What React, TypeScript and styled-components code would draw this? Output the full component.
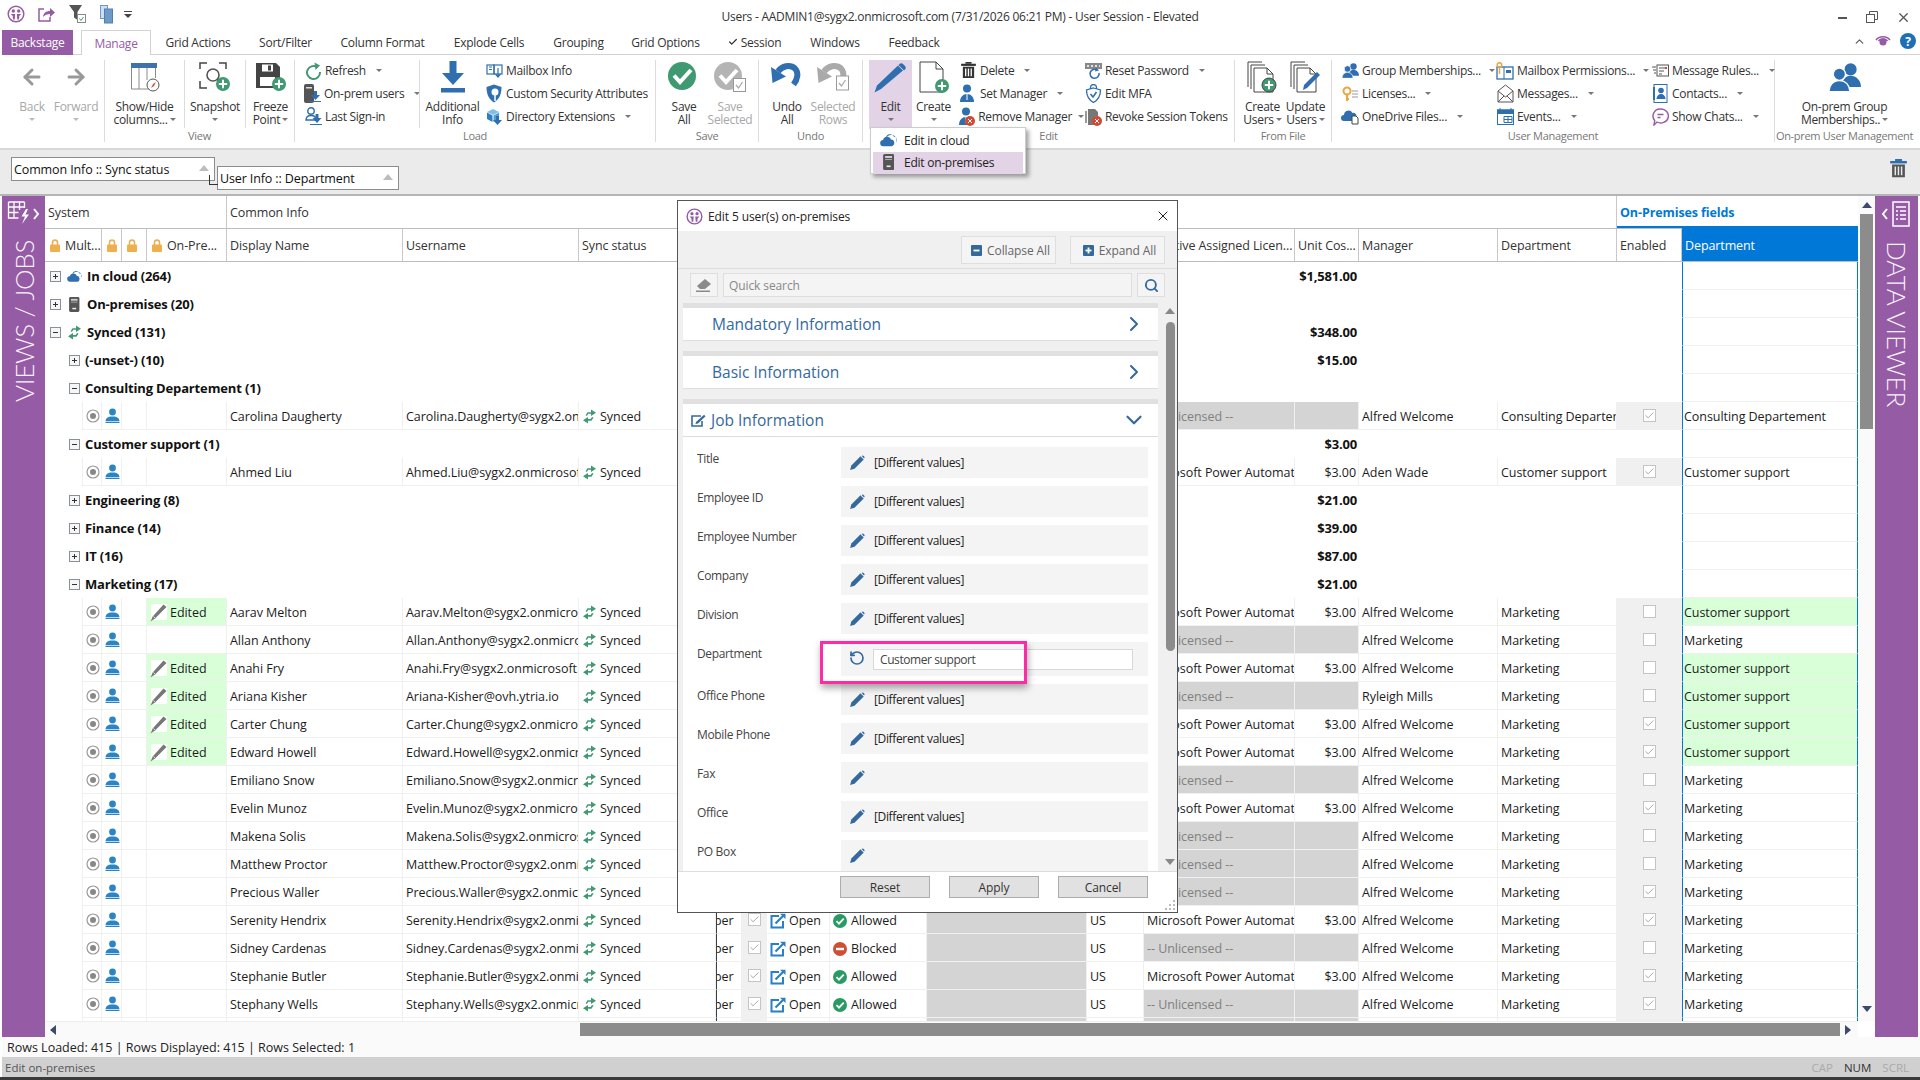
import React from "react";
import styled, { createGlobalStyle } from "styled-components";
import { ArrowLeft, ArrowRight, Check, ChevronRight, ChevronDown, ChevronUp, RotateCcw, Search, X } from "lucide-react";

const PURPLE = "#955ba5";
const BLUE = "#2f6fb0";
const GREEN = "#3f9a72";
const STEEL = "#34699e";

const GlobalStyle = createGlobalStyle`
  html, body { margin: 0; padding: 0; width: 1920px; height: 1080px; overflow: hidden; background: #fff; }
  body { font-family: "Open Sans", "Noto Sans", sans-serif; font-size: 12px; color: #222; }
  * { box-sizing: border-box; }
`;

/* ---------- little drawings ---------- */

const Logo = ({ s = 18 }: { s?: number }) => (
  <svg width={s} height={s} viewBox="0 0 18 18">
    <circle cx="9" cy="9" r="7.8" fill="none" stroke={PURPLE} strokeWidth="1.5" />
    <circle cx="6.3" cy="6" r="1.7" fill={PURPLE} />
    <circle cx="11.7" cy="6" r="1.7" fill={PURPLE} />
    <path d="M3.8 9h4.4l-.5 5.5H6L5.7 11zM9.8 9h4.4l-1.9 2-.3 3.5H10.3z" fill={PURPLE} />
  </svg>
);
const Padlock = () => (
  <svg width="10" height="13" viewBox="0 0 10 13">
    <path d="M2.5 6V3.6a2.5 2.5 0 0 1 5 0V6" fill="none" stroke="#e6b35c" strokeWidth="1.6" />
    <rect y="5.5" width="10" height="7.5" rx="1" fill="#eeb04c" />
  </svg>
);
const Radio = () => (
  <svg width="14" height="14" viewBox="0 0 14 14">
    <circle cx="7" cy="7" r="6" fill="#fff" stroke="#999" strokeWidth="1.2" />
    <circle cx="7" cy="7" r="3" fill="#888" />
  </svg>
);
const Person = () => (
  <svg width="15" height="15" viewBox="0 0 15 15">
    <circle cx="7.5" cy="4" r="3.4" fill="#2b85c5" />
    <path d="M.5 13c.3-2.8 2.700-3.900 4.700-4.400h4.600c2 .5 4.400 1.600 4.700 4.400z" fill="#2b85c5" />
    <rect x=".5" y="13.700" width="14" height="1.300" fill="#2b85c5" />
  </svg>
);
const SyncArrows = ({ c = GREEN }: { c?: string }) => (
  <svg width="15" height="15" viewBox="0 0 15 15" fill={c}>
    <path d="M3.500 6.500 5.500 3.200H9V.5l5 3.200-5 3.200V4.800H6.300L5 6.800z" />
    <path d="M11.500 8.500 9.500 11.800H6v2.700L1 11.300l5-3.200V10h2.700l1.300-2z" />
  </svg>
);
const CloudIcon = ({ s = 15 }: { s?: number }) => (
  <svg width={s} height={s * 0.8} viewBox="0 0 20 16" fill="#2f6fb0">
    <path d="M7 5.500a5 5 0 0 1 9.500-1 3.800 3.800 0 0 1 2.500 6.500 6 6 0 0 0-11.500-5z" />
    <path d="M4 15.500a3.600 3.600 0 0 1-.4-7.200 5 5 0 0 1 9.500-.6 4 4 0 0 1 .9 7.800z" />
  </svg>
);
const ServerIcon = ({ s = 15 }: { s?: number }) => (
  <svg width={s * 0.7} height={s} viewBox="0 0 11 16">
    <rect width="11" height="16" rx="1.500" fill="#555" />
    <rect x="2" y="2" width="7" height="2" fill="#ccc" />
    <rect x="2" y="5" width="7" height="1" fill="#aaa" />
    <rect x="3.500" y="11.500" width="4" height="1.600" fill="#eee" />
  </svg>
);
const GreyPencil = () => (
  <svg width="17" height="18" viewBox="0 0 17 18">
    <rect x="1" width="16" height="16" fill="#fff" />
    <path d="M13.500.5 16.500 3 5 14.500 .5 17.500l2.200-5z" fill="#777" />
    <path d="M3.500 12.500 5.500 14.500" stroke="#ddd" />
  </svg>
);
const BluePencil = () => (
  <svg width="16" height="16" viewBox="0 0 15 15" fill={STEEL}>
    <path d="M10.800 1.200 13.800 4.200 5.200 12.800 1 14l1.200-4.200z" />
    <path d="M11.900.5 14.500 3.100 13.800 4 11 1.200z" fill="#fff" />
    <path d="M12.200.6a1 1 0 0 1 1.200 0l1 1a1 1 0 0 1 0 1.200l-.4.400L11.800 1z" />
  </svg>
);
const OpenLink = () => (
  <svg width="16" height="16" viewBox="0 0 16 16" fill="none" stroke="#2b7fc3">
    <path d="M9 3H1.500v11.500H13V8" strokeWidth="2" />
    <path d="M5.500 10.500 13 3" strokeWidth="2.200" />
    <path d="M10 .8h5.500V6z" fill="#2b7fc3" stroke="none" />
  </svg>
);
const Allowed = () => (
  <svg width="14" height="14" viewBox="0 0 14 14">
    <circle cx="7" cy="7" r="7" fill="#2a9a63" />
    <path d="M3.500 7.200 6 9.600l4.700-5" fill="none" stroke="#fff" strokeWidth="1.800" />
  </svg>
);
const Blocked = () => (
  <svg width="14" height="14" viewBox="0 0 14 14">
    <circle cx="7" cy="7" r="7" fill="#cf4f35" />
    <rect x="3" y="5.800" width="8" height="2.400" fill="#fff" />
  </svg>
);
const BoxIcon = ({ plus }: { plus?: boolean }) => (
  <svg width="11" height="11" viewBox="0 0 11 11" fill="none">
    <rect x=".5" y=".5" width="10" height="10" fill="#f6f6f6" stroke="#8a8f98" />
    <path d="M3 5.500h5" stroke="#333" />
    {plus && <path d="M5.500 3v5" stroke="#333" />}
  </svg>
);
const RailGrid = () => (
  <svg width="34" height="28" viewBox="0 0 34 28" fill="none" stroke="#fff">
    <path d="M1.500 2h16M1.500 2v16h10M7 2v16M12.500 2v8M1.500 7h16M1.500 12.500h10M17.500 2v6" strokeWidth="1.300" />
    <path d="M19 9 14.500 16.500h3.500L15 24l7-9.500h-3.500L21 9z" fill="#fff" stroke="none" />
    <path d="m27 9 4 5-4 5" strokeWidth="2" />
  </svg>
);
const RailList = () => (
  <svg width="32" height="28" viewBox="0 0 32 28" fill="none" stroke="#fff">
    <path d="M6 9l-4 5 4 5" strokeWidth="2" />
    <rect x="12" y="2" width="16" height="24" strokeWidth="1.500" />
    <path d="M15 7h10M15 11h2M19 11h6M15 15h2M19 15h6M15 19h2M19 19h6" strokeWidth="1.300" />
  </svg>
);

/* ribbon pictures */
const Plus = ({ x, y, r = 7 }: { x: number; y: number; r?: number }) => (
  <g>
    <circle cx={x} cy={y} r={r} fill={GREEN} />
    <path d={`M${x - r * 0.6} ${y}h${r * 1.2}M${x} ${y - r * 0.6}v${r * 1.2}`} stroke="#fff" strokeWidth="2" />
  </g>
);
const ShowHide = () => (
  <svg width="30" height="30" viewBox="0 0 30 30" fill="none">
    <rect x="1" y="1" width="26" height="5" fill="#3d73ad" />
    <path d="M1.500 6v21h21M9 6v21M17 6v12M25.500 6v10" stroke="#8a8a8a" />
    <circle cx="23" cy="23" r="6" fill="#fff" stroke="#555" />
    <path d="m26 20-2 4-3 2 2-4z" fill="#cf5640" />
  </svg>
);
const Snapshot = () => (
  <svg width="32" height="30" viewBox="0 0 32 30" fill="none">
    <path d="M1 7V1h7M20 1h7v6M1 19v7h7" stroke="#444" strokeWidth="1.500" />
    <circle cx="14" cy="13" r="6" stroke="#555" strokeWidth="1.600" />
    <path d="M18 17l4 3" stroke="#555" strokeWidth="2" />
    <Plus x={24} y={22} />
  </svg>
);
const Freeze = () => (
  <svg width="32" height="30" viewBox="0 0 32 30">
    <path d="M1 1h20l4 4v21H1z" fill="#444" />
    <rect x="7" y="2.500" width="11" height="7" fill="#fff" />
    <rect x="13" y="3.500" width="3" height="5" fill="#444" />
    <rect x="5" y="15" width="15" height="9" fill="#fff" />
    <Plus x={24} y={22} />
  </svg>
);
const Refresh = () => (
  <svg width="17" height="18" viewBox="0 0 17 18" fill="none">
    <path d="M12 5A6.500 6.500 0 1 0 15 10" stroke={GREEN} strokeWidth="2" />
    <path d="M9.500 .5 15 3.500 10.500 8z" fill={GREEN} />
  </svg>
);
const DownArrow = ({ x, y }: { x: number; y: number }) => (
  <path d={`M${x - 1.500} ${y}h3v4h3L${x} ${y + 9}l-4.500-5h3z`} fill="#2f6fb0" />
);
const OnPremUsers = () => (
  <svg width="17" height="20" viewBox="0 0 17 20">
    <rect width="10" height="19" rx="2" fill="#555" />
    <rect x="2" y="3" width="6" height="1.500" fill="#ddd" />
    <DownArrow x={11.500} y={7} />
    <path d="M5 17.500h12" stroke="#2f6fb0" />
  </svg>
);
const SignIn = () => (
  <svg width="17" height="19" viewBox="0 0 17 19" fill="none">
    <circle cx="6" cy="4" r="3.200" stroke={BLUE} strokeWidth="1.400" />
    <path d="M1 13c0-3 2-4.500 5-4.500s5 1.500 5 4.500z" stroke={BLUE} strokeWidth="1.400" />
    <DownArrow x={12} y={7} />
    <path d="M5 17.500h12" stroke={BLUE} />
  </svg>
);
const AddInfo = () => (
  <svg width="24" height="32" viewBox="0 0 24 32" fill="#2f6fb0">
    <path d="M8.500 0h7v12H23L12 24 1 12h7.500z" />
    <rect y="27" width="24" height="4.500" />
  </svg>
);
const MailboxIcon = () => (
  <svg width="17" height="16" viewBox="0 0 17 16" fill="none" stroke={BLUE} strokeWidth="1.200">
    <rect x="1" y="2" width="7" height="9" />
    <rect x="8" y="2" width="8" height="9" />
    <path d="M3 4h3M3 6.500h3" />
    <path d="M12 5v8M9.500 11 12 14l2.500-3" />
  </svg>
);
const ShieldIcon = () => (
  <svg width="17" height="19" viewBox="0 0 17 19">
    <path d="M8 .5 15.500 3c0 8-2.500 12-7.500 15.500C3 15 .5 11 .5 3z" fill="#2f6fb0" />
    <circle cx="9" cy="8" r="3.500" fill="#fff" />
    <path d="M9 11v6" stroke="#fff" strokeWidth="1.500" />
  </svg>
);
const CubeIcon = () => (
  <svg width="17" height="18" viewBox="0 0 17 18">
    <path d="M7 1 13 4 7 7 1 4z" fill="#7fc0e8" />
    <path d="M1 4.500 6.500 7.500V14L1 11z" fill="#2f7fc0" />
    <path d="M13 4.500 7.500 7.500V14L13 11z" fill="#4d9fd8" />
    <DownArrow x={11.500} y={8} />
  </svg>
);
const CheckBadge = ({ c, box }: { c: string; box?: boolean }) => (
  <svg width="32" height="30" viewBox="0 0 32 30">
    <ellipse cx="14" cy="14" rx="14" ry="14" fill={c} />
    <path d="M6 13.500 12 20 23 8" fill="none" stroke="#fff" strokeWidth="4" />
    {box && <rect x="19.500" y="16.500" width="12" height="13" fill="#fff" stroke="#999" />}
    {box && <path d="M22 23l2.500 3 4-6" fill="none" stroke="#aaa" strokeWidth="1.300" />}
  </svg>
);
const UndoBadge = ({ c, box }: { c: string; box?: boolean }) => (
  <svg width="32" height="30" viewBox="0 0 32 30" fill="none">
    <path d="M7 9.500C11 4 19 2 24 6.500c4 4 2.500 11-1.500 16" stroke={c} strokeWidth="6" />
    <path d="M0 5 1.500 21 15 14.500z" fill={c} />
    {box && <rect x="19.500" y="14" width="12" height="14" fill="#fff" stroke="#999" />}
    {box && <path d="M22 21l2.500 3 4-6" stroke="#aaa" strokeWidth="1.300" />}
  </svg>
);
const BigPencil = () => (
  <svg width="33" height="32" viewBox="0 0 33 32" fill="#2f6fb0">
    <path d="M24 4.500 29 9.500 7 28 .5 31.500l2.500-7z" />
    <path d="M25.500 3c1-1 2.500-1 3.500 0l2 2c1 1 1 2.500 0 3.500L30 9.500 24.500 4z" />
  </svg>
);
const NewDoc = () => (
  <svg width="30" height="32" viewBox="0 0 30 32">
    <path d="M1 1h16l7 7v23H1z" fill="#fff" stroke="#444" />
    <path d="M17 1v7h7" fill="none" stroke="#444" />
    <Plus x={23} y={25} />
  </svg>
);
const DocStack = ({ pencil }: { pencil?: boolean }) => (
  <svg width="32" height="32" viewBox="0 0 32 32" fill="none" stroke="#444">
    <path d="M1 26V1h14" />
    <path d="M4 28V4h14" />
    <path d="M7 31V7h13l6 6v18z" fill="#fff" />
    <path d="M20 7v6h6" />
    {pencil ? <path d="M27 11l3 3-13 13-4 2 1-5z" fill="#2f6fb0" stroke="none" /> : <Plus x={22} y={24} />}
  </svg>
);
const TrashIcon = ({ lid = "#2f6fb0", body = "#555", w = 17 }: { lid?: string; body?: string; w?: number }) => (
  <svg width={w} height={w * 1.100} viewBox="0 0 17 19">
    <rect x="5" width="7" height="2" fill={lid} />
    <rect x="0" y="2" width="17" height="2.500" fill={lid} />
    <path d="M2 5.500h13V18.500H2zM4.500 7.500v9h1.500v-9zm3.200 0v9h1.500v-9zm3.200 0v9h1.500v-9z" fill={body} fillRule="evenodd" />
  </svg>
);
const Manager = ({ red }: { red?: boolean }) => (
  <svg width="16" height="19" viewBox="0 0 16 19">
    <circle cx="7" cy="4.500" r="4" fill="#2f6fb0" />
    <path d="M0 18c0-5 3-8 7-8s7 3 7 8z" fill="#2f6fb0" />
    <path d="M7 10v6" stroke="#fff" />
    {red && <circle cx="11" cy="14" r="5" fill="#d04a35" />}
    {red && <path d="m9 12 4 4m0-4-4 4" stroke="#fff" />}
  </svg>
);
const ResetPw = () => (
  <svg width="17" height="18" viewBox="0 0 17 18">
    <rect y="1" width="17" height="6" fill="#888" />
    <path d="M2 4h2M6 4h2M10 4h2M14 4h1" stroke="#fff" strokeWidth="1.500" />
    <path d="M14 11a4.500 4.500 0 1 1-2-3" fill="none" stroke="#2f6fb0" strokeWidth="1.600" />
    <path d="M11 5.500 14 8.500 10 9.500z" fill="#2f6fb0" />
  </svg>
);
const MfaIcon = () => (
  <svg width="17" height="19" viewBox="0 0 17 19" fill="none" stroke="#2f6fb0" strokeWidth="1.300">
    <path d="M8.500 4 15.500 6c0 6-2.500 10-7 12.500C4 16 1.500 12 1.500 6z" />
    <path d="M5.500 5V3.500a3 3 0 0 1 6 0V5" />
    <path d="m5.500 10 2.500 3 3.500-5" strokeWidth="1.600" />
  </svg>
);
const Revoke = () => (
  <svg width="17" height="18" viewBox="0 0 17 18">
    <path d="M3 1h7l3 3v4a5 5 0 0 0-3 9H3z" fill="#777" />
    <path d="M1 3v12" stroke="#777" strokeWidth="1.500" />
    <circle cx="12" cy="13" r="5" fill="#d04a35" />
    <path d="m10 11 4 4m0-4-4 4" stroke="#fff" />
  </svg>
);
const Groups = ({ s = 17 }: { s?: number }) => (
  <svg width={s} height={s * 0.9} viewBox="0 0 20 18" fill="#2f6fb0">
    <circle cx="13.500" cy="4" r="3.800" />
    <path d="M8 15c0-4 2-7 5.500-7S20 11 20 15z" />
    <circle cx="6.500" cy="7" r="3.800" stroke="#fff" strokeWidth=".8" />
    <path d="M0 18c0-4 2.500-7 6.500-7s6.500 3 6.500 7z" stroke="#fff" strokeWidth=".8" />
  </svg>
);
const KeyDoc = () => (
  <svg width="17" height="16" viewBox="0 0 17 16" fill="none">
    <circle cx="5" cy="5" r="3.500" stroke="#e9a740" strokeWidth="2" />
    <path d="M5 8v7M5 13h2" stroke="#e9a740" strokeWidth="2" />
    <path d="M10 5h6M10 8h6M10 11h6" stroke="#999" />
  </svg>
);
const OneDrive = () => (
  <svg width="18" height="17" viewBox="0 0 18 17">
    <path d="M3 13a3 3 0 0 1 0-6 4.500 4.500 0 0 1 8.500-2 3 3 0 0 1 4 3v5z" fill="#2f6fb0" />
    <path d="M11 8h4l2 2v6h-6z" fill="#fff" stroke="#444" />
  </svg>
);
const MailPerm = () => (
  <svg width="18" height="18" viewBox="0 0 18 18" fill="none">
    <rect x="1" y="5" width="16" height="12" stroke={BLUE} strokeWidth="1.300" />
    <path d="M8 5v12" stroke={BLUE} />
    <rect x="10" y="8" width="5" height="3" fill={BLUE} />
    <circle cx="3.500" cy="3" r="2.300" stroke="#e9a740" strokeWidth="1.500" />
    <path d="M3.500 5v7" stroke="#e9a740" strokeWidth="1.500" />
  </svg>
);
const Envelope = () => (
  <svg width="17" height="19" viewBox="0 0 17 19" fill="#fff" stroke="#555">
    <path d="M1 7 8.500 1 16 7v11H1z" />
    <path d="m1 7 7.500 6L16 7M1 18l6-6M16 18l-6-6" />
  </svg>
);
const Calendar = () => (
  <svg width="17" height="17" viewBox="0 0 17 17" fill="none" stroke={BLUE}>
    <rect x=".5" y="2" width="16" height="14.500" />
    <rect x=".5" y="2" width="16" height="3.500" fill={BLUE} />
    <path d="M3 0v3M14 0v3M7 8.500h8M7 11.500h8M7 14.500h8M7 8.500v6M11 8.500v6M15 8.500v6" />
  </svg>
);
const Rules = () => (
  <svg width="17" height="14" viewBox="0 0 17 14" fill="none" stroke="#555">
    <rect x="5" y="1" width="11.500" height="11" />
    <path d="M7 4h7M7 7h5M7 10h3M0 3h4M1 6h3M2 9h2" />
    <rect x="13" y="3" width="2" height="2" fill="#d04a35" stroke="none" />
  </svg>
);
const ContactCard = () => (
  <svg width="15" height="19" viewBox="0 0 15 19">
    <rect x="1" y=".5" width="13" height="18" fill="#fff" stroke="#2f6fb0" />
    <rect y="3" width="2" height="13" fill="#2f6fb0" />
    <circle cx="8" cy="6.500" r="2.800" fill="#2f6fb0" />
    <path d="M3.500 15c0-3 2-5 4.500-5s4.500 2 4.500 5z" fill="#2f6fb0" />
  </svg>
);
const ChatBubble = () => (
  <svg width="17" height="18" viewBox="0 0 17 18" fill="none" stroke={PURPLE} strokeWidth="1.400">
    <path d="M8.500 1a7.500 7 0 1 1-3.500 13L2 17l.7-4.500A7 7 0 0 1 8.500 1z" />
    <path d="M5.500 6.500h6M5.500 9.500h3" />
  </svg>
);
const Eraser = () => (
  <svg width="16" height="13" viewBox="0 0 16 13" fill="#8a8a8a">
    <path d="M9 0l6 5-6 5H4L1 7z" />
    <path d="M0 11.500h14v1.500H0z" />
  </svg>
);
const EditSquare = () => (
  <svg width="15" height="13" viewBox="0 0 15 13" fill="none" stroke={STEEL}>
    <path d="M10 2H1v10h10V7" strokeWidth="1.600" />
    <path d="M5 8 13 .8l1.500 1.500L7 9.500 4.500 10z" fill={STEEL} stroke="none" />
  </svg>
);
const SquareSign = ({ plus }: { plus?: boolean }) => (
  <svg width="11" height="11" viewBox="0 0 11 11">
    <rect width="11" height="11" rx="1" fill={STEEL} />
    <path d="M2.500 5.500h6" stroke="#fff" strokeWidth="1.800" />
    {plus && <path d="M5.500 2.500v6" stroke="#fff" strokeWidth="1.800" />}
  </svg>
);
const ShareBox = () => (
  <svg width="18" height="16" viewBox="0 0 18 16" fill="none" stroke={PURPLE}>
    <path d="M6 3H1v12h11v-4" strokeWidth="1.500" />
    <path d="M5 11c.5-4 3-6 7-6V2l5 4.500L12 11V8c-3 0-5 1-7 3z" fill={PURPLE} stroke="none" />
  </svg>
);
const FunnelCheck = () => (
  <svg width="18" height="20" viewBox="0 0 18 20">
    <path d="M0 1h13L8.500 8v8L5 13.500V8z" fill="#555" />
    <rect x="8.500" y="10.500" width="8" height="8" fill="#fff" stroke="#888" />
    <path d="m10.500 14.500 1.500 2 2.500-3.500" fill="none" stroke={GREEN} />
  </svg>
);
const CopyPanes = () => (
  <svg width="14" height="19" viewBox="0 0 14 19">
    <rect x=".5" y=".5" width="7" height="13" fill="#cfdeee" stroke="#6f9ac6" />
    <rect x="4.500" y="4" width="8" height="14" fill="#6f9ac6" stroke="#4f80b5" />
  </svg>
);
const Grip = () => (
  <svg width="12" height="12" viewBox="0 0 12 12" fill="#bbb">
    <path d="M9 1h2v2H9zM5 5h2v2H5zM9 5h2v2H9zM1 9h2v2H1zM5 9h2v2H5zM9 9h2v2H9z" />
  </svg>
);

/* ---------- shell ---------- */

const Shell = styled.div`
  position: relative;
  width: 1920px;
  height: 1080px;
  display: flex;
  flex-direction: column;
  overflow: hidden;
  background: #fff;
`;

const TitleBar = styled.div`
  height: 30px;
  display: grid;
  grid-template-columns: 1fr auto 1fr;
  align-items: center;
  color: #333;
`;
const Quick = styled.div`
  display: flex;
  align-items: center;
  padding-left: 7px;
  gap: 13px;
  margin-top: -2px;
`;
const QuickCaret = styled.span`
  width: 8px;
  height: 6px;
  margin-left: -3px;
  border-top: 1px solid #444;
  position: relative;
  &::after {
    content: "";
    position: absolute;
    left: 0;
    top: 2px;
    border: 4px solid transparent;
    border-top-color: #444;
  }
`;
const WindowTitle = styled.div`
  font-size: 12px;
  letter-spacing: -0.24px;
  margin-top: 3px;
`;
const WinControls = styled.div`
  display: flex;
  justify-content: flex-end;
  align-items: center;
  gap: 17px;
  padding-right: 9px;
  margin-top: 5px;
  color: #555;
`;

const TabBar = styled.div`
  height: 25px;
  margin-left: 2px;
  display: flex;
  border-bottom: 1px solid #d2d2d2;
`;
const Backstage = styled.div`
  width: 71px;
  height: 25px;
  margin-right: 8px;
  background: ${PURPLE};
  color: #fff;
  display: flex;
  align-items: center;
  justify-content: center;
  letter-spacing: -0.25px;
`;
const Tab = styled.div<{ $w: number; $active?: boolean }>`
  width: ${(p) => p.$w}px;
  height: ${(p) => (p.$active ? 25 : 24)}px;
  display: flex;
  align-items: center;
  justify-content: center;
  gap: 3px;
  letter-spacing: -0.25px;
  color: ${(p) => (p.$active ? PURPLE : "#333")};
  background: #fff;
  ${(p) => p.$active && "border: 1px solid #d2d2d2; border-bottom: none;"}
`;
const TabTools = styled.div`
  margin-left: auto;
  display: flex;
  align-items: center;
  gap: 9px;
  padding-right: 4px;
  margin-top: -2px;
`;
const HelpDot = styled.div`
  width: 16px;
  height: 16px;
  border-radius: 50%;
  background: #1f6fb5;
  color: #fff;
  font-size: 12px;
  font-weight: 700;
  display: flex;
  align-items: center;
  justify-content: center;
`;

/* ---------- ribbon ---------- */

const Ribbon = styled.div`
  height: 95px;
  padding: 5px 0 0 2px;
  display: flex;
  border-bottom: 2px solid #d8d8d8;
`;
const Group = styled.div<{ $w: number; $plain?: boolean }>`
  width: ${(p) => p.$w}px;
  height: 82px;
  flex: none;
  display: flex;
  flex-direction: column;
  ${(p) => !p.$plain && "border-right: 1px solid #dcdcdc;"}
`;
const GroupBody = styled.div<{ $pad?: number }>`
  height: 70px;
  display: flex;
  padding-left: ${(p) => p.$pad ?? 0}px;
`;
const GroupLabel = styled.div`
  height: 12px;
  line-height: 12px;
  text-align: center;
  color: #777;
  font-size: 11px;
  letter-spacing: -0.3px;
  white-space: nowrap;
`;
const Big = styled.div<{ $w: number; $muted?: boolean; $on?: boolean }>`
  width: ${(p) => p.$w}px;
  height: 69px;
  flex: none;
  display: flex;
  flex-direction: column;
  align-items: center;
  font-size: 12px;
  letter-spacing: -0.3px;
  color: ${(p) => (p.$muted ? "#a8a8a8" : "#333")};
  background: ${(p) => (p.$on ? "#e3d3e6" : "transparent")};
`;
const BigIcon = styled.div`
  height: 40px;
  padding-bottom: 6px;
  display: flex;
  align-items: center;
  justify-content: center;
`;
const BigLine = styled.div`
  height: 13px;
  line-height: 13px;
  white-space: nowrap;
  display: flex;
  align-items: center;
  gap: 2px;
`;
const Caret = styled.span<{ $light?: boolean }>`
  display: inline-block;
  flex: none;
  border: 3px solid transparent;
  border-bottom: none;
  border-top: 3px solid ${(p) => (p.$light ? "#bbb" : "#777")};
`;
const BigCaret = styled(Caret)`
  margin-top: 5px;
`;
const Sep = styled.div`
  width: 1px;
  height: 68px;
  flex: none;
  background: #dcdcdc;
`;
const SmallCol = styled.div<{ $w: number; $pad?: number }>`
  width: ${(p) => p.$w}px;
  flex: none;
  margin-top: -1px;
  padding-left: ${(p) => p.$pad ?? 0}px;
`;
const Small = styled.div<{ $gap?: number }>`
  height: 23px;
  display: flex;
  align-items: center;
  gap: 3px;
  white-space: nowrap;
  letter-spacing: -0.3px;
  color: #333;
  ${Caret} { margin-left: ${(p) => p.$gap ?? 7}px; }
`;
const SmallIcon = styled.div`
  width: 18px;
  display: flex;
  justify-content: center;
`;

const EditMenu = styled.div`
  position: absolute;
  left: 870px;
  top: 127px;
  width: 156px;
  height: 47px;
  z-index: 5;
  padding: 2px;
  background: #fff;
  border: 1px solid #ccc;
  box-shadow: 3px 3px 4px rgba(0, 0, 0, 0.35);
`;
const MenuItem = styled.div<{ $on?: boolean }>`
  height: 22px;
  padding-bottom: 2px;
  display: flex;
  align-items: center;
  letter-spacing: -0.25px;
  background: ${(p) => (p.$on ? "#e3d3e6" : "transparent")};
`;
const MenuIcon = styled.div`
  width: 31px;
  display: flex;
  justify-content: center;
`;

/* ---------- filter bar ---------- */

const FilterBar = styled.div`
  height: 46px;
  background: #ebebeb;
  border-bottom: 2px solid #b5b5b5;
  display: flex;
  align-items: flex-start;
  padding: 7px 13px 0 11px;
`;
const Chip = styled.div<{ $w: number; $drop?: boolean }>`
  position: relative;
  width: ${(p) => p.$w}px;
  height: 24px;
  margin: ${(p) => (p.$drop ? "9px 0 0 2px" : "0")};
  background: #fff;
  border: 1px solid #8c8c8c;
  display: flex;
  align-items: center;
  padding: 1px 0 0 2px;
  font-size: 12.500px;
  letter-spacing: -0.12px;
  color: #111;
  &::after {
    content: "";
    position: absolute;
    right: 5px;
    top: 7px;
    border: 5px solid transparent;
    border-top: none;
    border-bottom: 6px solid #bdbdbd;
  }
  ${(p) =>
    p.$drop &&
    `&::before {
      content: "";
      position: absolute;
      left: -9px;
      top: 8px;
      width: 8px;
      height: 9px;
      border-left: 1px solid #333;
      border-bottom: 1px solid #333;
    }`}
`;
const Bin = styled.div`
  margin-left: auto;
  margin-top: 2px;
`;

/* ---------- grid ---------- */

const COLUMNS = "37px 20px 20px 25px 80px 176px 176px 137px 26px 25px 63px 97px 160px 57px 151px 64px 139px 119px 65px 176px";

const Main = styled.div`
  height: 841px;
  margin-left: 2px;
  display: flex;
`;
const Rail = styled.div`
  width: 43px;
  flex: none;
  background: ${PURPLE};
  display: flex;
  flex-direction: column;
  align-items: center;
  padding-top: 4px;
`;
const RailText = styled.div<{ $flip?: boolean }>`
  writing-mode: vertical-rl;
  ${(p) => p.$flip && "transform: rotate(180deg); letter-spacing: -0.3px;"}
  margin-top: ${(p) => (p.$flip ? 12 : 13)}px;
  font-family: "Lato", "Open Sans", sans-serif;
  font-weight: 300;
  font-size: 26px;
  line-height: 36px;
  color: #f7f2f8;
  white-space: nowrap;
`;
const GridPane = styled.div`
  width: 1830px;
  flex: none;
`;
const GridBody = styled.div`
  height: 825px;
  display: flex;
`;
const GridTable = styled.div`
  width: 1813px;
  flex: none;
  overflow: hidden;
`;
const HeadTop = styled.div`
  height: 33px;
  display: grid;
  grid-template-columns: ${COLUMNS};
  border-bottom: 1px solid #bdbdbd;
`;
const HeadRow = styled.div`
  height: 33px;
  display: grid;
  grid-template-columns: ${COLUMNS};
  border-bottom: 1px solid #bdbdbd;
`;
const HeadCell = styled.div<{ $span?: string; $blue?: boolean; $fill?: boolean; $clip?: boolean }>`
  ${(p) => p.$span && `grid-column: ${p.$span};`}
  display: flex;
  align-items: center;
  gap: 5px;
  padding: 0 0 0 ${(p) => (p.$clip ? 5 : 3)}px;
  white-space: nowrap;
  overflow: hidden;
  font-size: 12.500px;
  letter-spacing: -0.1px;
  color: #333;
  border-right: 1px solid #c8c8c8;
  ${(p) => p.$blue && `border-top: 2px solid #0078d7; color: #0078d7; font-weight: 700; border-right: none; margin-top: 30px; height: 2px; padding: 0; overflow: visible;`}
  ${(p) => p.$fill && `background: #0078d7; color: #fff; margin-top: -2px; border-right: none; padding-top: 2px;`}
`;
const BlueHeadText = styled.span`
  display: block;
  transform: translate(3px, -16px);
`;
const Row = styled.div`
  height: 28px;
  display: grid;
  grid-template-columns: ${COLUMNS};
`;
const Cell = styled.div<{ $bg?: string; $right?: boolean; $muted?: boolean; $center?: boolean; $start?: boolean; $gap?: number }>`
  height: 28px;
  display: flex;
  align-items: center;
  justify-content: ${(p) => (p.$right ? "flex-end" : p.$center ? "center" : "flex-start")};
  gap: ${(p) => p.$gap ?? 3}px;
  padding: ${(p) => (p.$right ? "2px 2px 0 0" : p.$center ? "0 0 0 1px" : "2px 0 0 3px")};
  white-space: nowrap;
  overflow: hidden;
  font-size: 12.500px;
  letter-spacing: -0.05px;
  color: ${(p) => (p.$muted ? "#808080" : "#1c1c1c")};
  background: ${(p) => p.$bg ?? "#fff"};
  border-right: 1px solid #f0f0f0;
  border-bottom: 1px solid #f0f0f0;
  ${(p) => p.$start && "border-left: 1px solid #f0f0f0;"}
`;
const Frozen = styled(Cell)`
  border-left: 1px solid #3a3f47;
  padding-left: 0;
  text-indent: -3px;
`;
const BlueCell = styled(Cell)`
  border-left: 1px solid #0078d7;
  border-right: 1px solid #0078d7;
  padding-left: 1px;
`;
const GroupTitle = styled.div<{ $level: number }>`
  grid-column: 1 / 16;
  height: 28px;
  display: flex;
  align-items: center;
  gap: 5px;
  padding-left: ${(p) => (p.$level ? 24 : 5)}px;
  font-size: 13px;
  font-weight: 700;
  letter-spacing: -0.15px;
  color: #111;
`;
const GroupGlyph = styled.div`
  width: 15px;
  margin: 0 0 0 1px;
  display: flex;
  justify-content: center;
`;
const GroupCost = styled.div`
  height: 28px;
  display: flex;
  align-items: center;
  justify-content: flex-end;
  padding-right: 2px;
  font-size: 13px;
  font-weight: 700;
  letter-spacing: -0.2px;
  color: #111;
`;
const GroupGap = styled.div`
  grid-column: 17 / 20;
`;
const Tick = styled.div`
  width: 13px;
  height: 13px;
  border: 1px solid #c4c4c4;
  background: #fff;
  display: flex;
  align-items: center;
  justify-content: center;
  color: #a0a0a0;
`;
const StatusWord = styled.span`
  margin-left: 1px;
`;
const VScroll = styled.div`
  width: 17px;
  flex: none;
  background: #fafafa;
  display: flex;
  flex-direction: column;
  align-items: center;
  padding-top: 6px;
`;
const Thumb = styled.div<{ $h?: number; $w?: number }>`
  background: #8c8c8c;
  ${(p) => p.$h && `height: ${p.$h}px; width: 13px;`}
  ${(p) => p.$w && `width: ${p.$w}px; height: 13px;`}
`;
const VThumb = styled(Thumb)`
  margin-top: 6px;
`;
const ArrowUp = styled.div<{ $c?: string }>`
  border: 5px solid transparent;
  border-top: none;
  border-bottom: 6px solid ${(p) => p.$c ?? "#3c4a6b"};
`;
const ArrowDown = styled.div<{ $c?: string; $gap?: number }>`
  margin-top: ${(p) => p.$gap ?? 0}px;
  border: 5px solid transparent;
  border-bottom: none;
  border-top: 6px solid ${(p) => p.$c ?? "#3c4a6b"};
`;
const ArrowLeftTri = styled.div`
  border: 5px solid transparent;
  border-left: none;
  border-right: 6px solid #3c4a6b;
`;
const ArrowRightTri = styled.div`
  border: 5px solid transparent;
  border-right: none;
  border-left: 6px solid #3c4a6b;
`;
const HScroll = styled.div`
  width: 1813px;
  height: 16px;
  background: #fafafa;
  display: flex;
  align-items: center;
  padding-left: 5px;
  border-top: 1px solid #eee;
`;
const HThumb = styled(Thumb)`
  margin-left: 524px;
  margin-right: 5px;
`;

/* ---------- status ---------- */

const StatusTop = styled.div`
  height: 20px;
  margin-left: 2px;
  padding-left: 5px;
  display: flex;
  align-items: center;
  background: #fafafa;
  font-size: 12.500px;
  color: #222;
`;
const StatusBottom = styled.div`
  height: 20px;
  margin-left: 2px;
  padding: 0 11px 0 3px;
  display: flex;
  align-items: center;
  background: #d0d0d0;
  color: #555;
  font-size: 11.500px;
`;
const Lights = styled.div`
  margin-left: auto;
  display: flex;
  gap: 11px;
`;
const Light = styled.span<{ $on?: boolean }>`
  color: ${(p) => (p.$on ? "#333" : "#aaa")};
`;
const Taskbar = styled.div`
  height: 3px;
  background: #3a3a3a;
`;

/* ---------- dialog ---------- */

const Dialog = styled.div`
  position: absolute;
  left: 677px;
  top: 200px;
  width: 501px;
  height: 713px;
  z-index: 4;
  display: flex;
  flex-direction: column;
  background: #fff;
  border: 1px solid #555;
`;
const DialogHead = styled.div`
  height: 30px;
  flex: none;
  display: flex;
  align-items: center;
  padding: 0 6px 0 8px;
  gap: 5px;
  letter-spacing: -0.1px;
  color: #222;
`;
const DialogTitleText = styled.div`
  flex: 1;
`;
const ToolRow = styled.div`
  height: 38px;
  flex: none;
  display: flex;
  justify-content: flex-end;
  gap: 14px;
  padding: 5px 12px 0 0;
  background: #f0f0f0;
  border-bottom: 1px solid #ddd;
`;
const ToolButton = styled.div`
  width: 95px;
  height: 28px;
  padding-left: 4px;
  display: flex;
  align-items: center;
  justify-content: center;
  gap: 5px;
  background: #f4f4f4;
  border: 1px solid #dedede;
  letter-spacing: -0.1px;
  color: #666;
`;
const SearchRow = styled.div`
  height: 34px;
  flex: none;
  display: flex;
  gap: 5px;
  padding: 4px 12px 0 12px;
  background: #f0f0f0;
`;
const SearchButton = styled.div`
  width: 28px;
  height: 24px;
  flex: none;
  display: flex;
  align-items: center;
  justify-content: center;
  background: #f4f4f4;
  border: 1px solid #dedede;
`;
const SearchInput = styled.input`
  flex: 1;
  min-width: 0;
  height: 24px;
  border: 1px solid #dedede;
  background: #f4f4f4;
  padding: 0 5px;
  font: inherit;
  letter-spacing: -0.1px;
  &::placeholder { color: #888; }
`;
const DialogBody = styled.div`
  height: 568px;
  flex: none;
  display: flex;
  padding-left: 5px;
  background: #f0f0f0;
`;
const Sections = styled.div`
  width: 475px;
  flex: none;
  overflow: hidden;
`;
const SectionHead = styled.div<{ $open?: boolean }>`
  height: 38px;
  margin-bottom: ${(p) => (p.$open ? 0 : 10)}px;
  display: flex;
  align-items: center;
  justify-content: space-between;
  padding: 0 ${(p) => (p.$open ? 11 : 12)}px 0 ${(p) => (p.$open ? 8 : 29)}px;
  background: #fff;
  border-top: 5px solid #e0e0e0;
  border-bottom: 1px solid #ddd;
  color: ${STEEL};
  font-size: 15.500px;
  font-weight: 500;
`;
const SectionName = styled.div`
  display: flex;
  align-items: center;
  gap: 5px;
`;
const Fields = styled.div`
  background: #fff;
  padding-top: 10px;
  height: 435px;
  overflow: hidden;
`;
const FieldRow = styled.div<{ $tall?: boolean }>`
  display: grid;
  grid-template-columns: 158px 307px;
  height: ${(p) => (p.$tall ? 34 : 31)}px;
  margin-bottom: 8px;
`;
const FieldLabel = styled.div`
  padding: 4px 0 0 14px;
  line-height: 16px;
  font-size: 12px;
  letter-spacing: -0.35px;
  color: #444;
`;
const FieldValue = styled.div`
  background: #f4f4f4;
  display: flex;
  align-items: center;
  gap: 9px;
  padding-left: 8px;
  letter-spacing: -0.35px;
  color: #222;
`;
const FieldInput = styled.input`
  width: 260px;
  height: 21px;
  margin: 0 0 0 -2px;
  border: 1px solid #d8d8d8;
  background: #fff;
  padding: 1px 6px 0;
  font: inherit;
  letter-spacing: -0.42px;
  color: #444;
`;
const RevertGlyph = styled.div`
  display: flex;
  width: 16px;
  margin: -3px 1px 0 0;
`;
const DScroll = styled.div`
  width: 20px;
  flex: none;
  display: flex;
  flex-direction: column;
  align-items: center;
  padding: 5px 0 0 4px;
`;
const DThumb = styled.div`
  width: 9px;
  height: 329px;
  margin-top: 8px;
  border-radius: 5px;
  background: #8c8c8c;
`;
const DialogFoot = styled.div`
  flex: 1;
  display: flex;
  justify-content: flex-end;
  gap: 19px;
  padding: 4px 29px 0 0;
  border-top: 1px solid #ddd;
  background: #fff;
`;
const FootButton = styled.div`
  width: 90px;
  height: 22px;
  display: flex;
  align-items: center;
  justify-content: center;
  background: #e1e1e1;
  border: 1px solid #adadad;
  letter-spacing: -0.1px;
  color: #333;
`;
const Callout = styled.div`
  position: absolute;
  left: 142px;
  top: 440px;
  width: 207px;
  height: 43px;
  border: 3px solid #ff2aa6;
  box-shadow: 1px 4px 7px rgba(0, 0, 0, 0.35);
  pointer-events: none;
`;
const GripCorner = styled.div`
  position: absolute;
  right: 1px;
  bottom: 1px;
  display: flex;
`;

/* ---------- data ---------- */

type User = { name: string; mail: string; edited?: boolean; lic: boolean; mgr?: string; on: boolean; blocked?: boolean };

const marketing: User[] = [
  { name: "Aarav Melton", mail: "Aarav.Melton@sygx2.onmicrosoft.com", edited: true, lic: true, on: false },
  { name: "Allan Anthony", mail: "Allan.Anthony@sygx2.onmicrosoft.com", lic: false, on: false },
  { name: "Anahi Fry", mail: "Anahi.Fry@sygx2.onmicrosoft.com", edited: true, lic: true, on: false },
  { name: "Ariana Kisher", mail: "Ariana-Kisher@ovh.ytria.io", edited: true, lic: false, mgr: "Ryleigh Mills", on: false },
  { name: "Carter Chung", mail: "Carter.Chung@sygx2.onmicrosoft.com", edited: true, lic: true, on: true },
  { name: "Edward Howell", mail: "Edward.Howell@sygx2.onmicrosoft.com", edited: true, lic: true, on: true },
  { name: "Emiliano Snow", mail: "Emiliano.Snow@sygx2.onmicrosoft.com", lic: false, on: false },
  { name: "Evelin Munoz", mail: "Evelin.Munoz@sygx2.onmicrosoft.com", lic: true, on: true },
  { name: "Makena Solis", mail: "Makena.Solis@sygx2.onmicrosoft.com", lic: false, on: false },
  { name: "Matthew Proctor", mail: "Matthew.Proctor@sygx2.onmicrosoft.com", lic: false, on: false },
  { name: "Precious Waller", mail: "Precious.Waller@sygx2.onmicrosoft.com", lic: false, on: true },
  { name: "Serenity Hendrix", mail: "Serenity.Hendrix@sygx2.onmicrosoft.com", lic: true, on: true },
  { name: "Sidney Cardenas", mail: "Sidney.Cardenas@sygx2.onmicrosoft.com", lic: false, on: false, blocked: true },
  { name: "Stephanie Butler", mail: "Stephanie.Butler@sygx2.onmicrosoft.com", lic: true, on: true },
  { name: "Stephany Wells", mail: "Stephany.Wells@sygx2.onmicrosoft.com", lic: false, on: true },
];

const fields = ["Title", "Employee ID", "Employee Number", "Company", "Division", "Department", "Office Phone", "Mobile Phone", "Fax", "Office", "PO Box"];

const tabs: [string, number][] = [
  ["Grid Actions", 94],
  ["Sort/Filter", 81],
  ["Column Format", 113],
  ["Explode Cells", 100],
  ["Grouping", 79],
  ["Grid Options", 95],
  ["Session", 83],
  ["Windows", 78],
  ["Feedback", 80],
];

/* ---------- rows ---------- */

const GroupRow = ({ level = 1, open, glyph, title, cost }: { level?: number; open?: boolean; glyph?: React.ReactNode; title: string; cost?: string }) => (
  <Row>
    <GroupTitle $level={level}>
      <BoxIcon plus={!open} />
      {glyph && <GroupGlyph>{glyph}</GroupGlyph>}
      {title}
    </GroupTitle>
    <GroupCost>{cost}</GroupCost>
    <GroupGap />
    <BlueCell $bg="#fff" />
  </Row>
);

const UserRow = ({ u, dept = "Marketing" }: { u: User; dept?: string }) => (
  <Row>
    <div />
    <Cell $center $start><Radio /></Cell>
    <Cell $center><Person /></Cell>
    <Cell />
    <Cell $bg={u.edited ? "#d9ffd9" : "#fff"} $gap={2}>
      {u.edited && <GreyPencil />}
      {u.edited && <StatusWord>Edited</StatusWord>}
    </Cell>
    <Cell>{u.name}</Cell>
    <Cell>{u.mail}</Cell>
    <Cell $gap={3}><SyncArrows /><span>Synced</span></Cell>
    <Frozen>per</Frozen>
    <Cell $bg="#f0f0f0" $center><Tick><Check size={11} strokeWidth={2} /></Tick></Cell>
    <Cell><OpenLink /><span>Open</span></Cell>
    <Cell $gap={4}>{u.blocked ? <Blocked /> : <Allowed />}<span>{u.blocked ? "Blocked" : "Allowed"}</span></Cell>
    <Cell $bg="#d4d4d4" />
    <Cell>US</Cell>
    <Cell $bg={u.lic ? "#fff" : "#d4d4d4"} $muted={!u.lic}>{u.lic ? "Microsoft Power Automate" : "-- Unlicensed --"}</Cell>
    <Cell $bg={u.lic ? "#fff" : "#d4d4d4"} $right>{u.lic ? "$3.00" : ""}</Cell>
    <Cell>{u.mgr ?? "Alfred Welcome"}</Cell>
    <Cell>{dept}</Cell>
    <Cell $bg="#f0f0f0" $center><Tick>{u.on && <Check size={11} strokeWidth={2} />}</Tick></Cell>
    <BlueCell $bg={u.edited ? "#d9ffd9" : "#fff"}>{u.edited ? "Customer support" : dept}</BlueCell>
  </Row>
);

const BigButton = ({ w, icon, lines, caret, muted, on }: { w: number; icon: React.ReactNode; lines: string[]; caret?: "inline" | "below"; muted?: boolean; on?: boolean }) => (
  <Big $w={w} $muted={muted} $on={on}>
    <BigIcon>{icon}</BigIcon>
    {lines.map((l, i) => (
      <BigLine key={l}>
        {l}
        {caret === "inline" && i === lines.length - 1 && <Caret />}
      </BigLine>
    ))}
    {caret === "below" && <BigCaret $light={muted} />}
  </Big>
);

const SmallButton = ({ icon, text, caret, gap }: { icon: React.ReactNode; text: string; caret?: boolean; gap?: number }) => (
  <Small $gap={gap}>
    <SmallIcon>{icon}</SmallIcon>
    {text}
    {caret && <Caret />}
  </Small>
);

export default function App() {
  return (
    <>
      <GlobalStyle />
      <Shell>
        <TitleBar>
          <Quick>
            <Logo />
            <ShareBox />
            <FunnelCheck />
            <CopyPanes />
            <QuickCaret />
          </Quick>
          <WindowTitle>Users - AADMIN1@sygx2.onmicrosoft.com (7/31/2026 06:21 PM) - User Session - Elevated</WindowTitle>
          <WinControls>
            <svg width="13" height="13" viewBox="0 0 13 13"><rect x="2" y="6" width="9" height="2" fill="#555" /></svg>
            <svg width="13" height="13" viewBox="0 0 13 13" fill="none" stroke="#555"><rect x=".5" y="3.500" width="8" height="8" /><path d="M3.500 3.500v-3h8v8h-3" /></svg>
            <X size={15} color="#555" strokeWidth={2} />
          </WinControls>
        </TitleBar>

        <TabBar>
          <Backstage>Backstage</Backstage>
          <Tab $w={70} $active>Manage</Tab>
          {tabs.map(([t, w]) => (
            <Tab key={t} $w={w}>
              {t === "Session" && <Check size={10} strokeWidth={3} />}
              {t}
            </Tab>
          ))}
          <TabTools>
            <ChevronUp size={13} color="#666" strokeWidth={2.5} />
            <svg width="16" height="14" viewBox="0 0 16 14" fill="none" stroke={PURPLE} strokeWidth="1.500">
              <path d="M1 6a8 6.500 0 0 1 14 0" />
              <path d="M3.500 7a5 4 0 0 1 9 0" />
              <circle cx="8" cy="8" r="3.500" fill={PURPLE} stroke="none" />
            </svg>
            <HelpDot>?</HelpDot>
          </TabTools>
        </TabBar>

        <Ribbon>
          <Group $w={103}>
            <GroupBody $pad={8}>
              <BigButton w={44} muted caret="below" icon={<ArrowLeft size={24} color="#999" strokeWidth={3} />} lines={["Back"]} />
              <BigButton w={44} muted caret="below" icon={<ArrowRight size={24} color="#999" strokeWidth={3} />} lines={["Forward"]} />
            </GroupBody>
          </Group>
          <Group $w={190}>
            <GroupBody>
              <BigButton w={79} caret="inline" icon={<ShowHide />} lines={["Show/Hide", "columns..."]} />
              <Sep />
              <BigButton w={60} caret="below" icon={<Snapshot />} lines={["Snapshot"]} />
              <Sep />
              <BigButton w={49} caret="inline" icon={<Freeze />} lines={["Freeze", "Point"]} />
            </GroupBody>
            <GroupLabel>View</GroupLabel>
          </Group>
          <Group $w={361}>
            <GroupBody>
              <SmallCol $w={124} $pad={9}>
                <SmallButton icon={<Refresh />} text="Refresh" caret />
                <SmallButton icon={<OnPremUsers />} text="On-prem users" caret />
                <SmallButton icon={<SignIn />} text="Last Sign-in" />
              </SmallCol>
              <Sep />
              <BigButton w={65} icon={<AddInfo />} lines={["Additional", "Info"]} />
              <SmallCol $w={170}>
                <SmallButton icon={<MailboxIcon />} text="Mailbox Info" />
                <SmallButton icon={<ShieldIcon />} text="Custom Security Attributes" />
                <SmallButton icon={<CubeIcon />} text="Directory Extensions" caret />
              </SmallCol>
            </GroupBody>
            <GroupLabel>Load</GroupLabel>
          </Group>
          <Group $w={103}>
            <GroupBody $pad={4}>
              <BigButton w={48} icon={<CheckBadge c={GREEN} />} lines={["Save", "All"]} />
              <BigButton w={44} muted icon={<CheckBadge c="#b4b4b4" box />} lines={["Save", "Selected"]} />
            </GroupBody>
            <GroupLabel>Save</GroupLabel>
          </Group>
          <Group $w={104}>
            <GroupBody $pad={4}>
              <BigButton w={48} icon={<UndoBadge c={BLUE} />} lines={["Undo", "All"]} />
              <BigButton w={44} muted icon={<UndoBadge c="#aaa" box />} lines={["Selected", "Rows"]} />
            </GroupBody>
            <GroupLabel>Undo</GroupLabel>
          </Group>
          <Group $w={372}>
            <GroupBody $pad={6}>
              <BigButton w={43} on caret="below" icon={<BigPencil />} lines={["Edit"]} />
              <BigButton w={43} caret="below" icon={<NewDoc />} lines={["Create"]} />
              <SmallCol $w={129} $pad={4}>
                <SmallButton icon={<TrashIcon w={15} lid="#333" body="#333" />} text="Delete" caret />
                <SmallButton icon={<Manager />} text="Set Manager" caret />
                <SmallButton icon={<Manager red />} text="Remove Manager" caret gap={3} />
              </SmallCol>
              <SmallCol $w={147}>
                <SmallButton icon={<ResetPw />} text="Reset Password" caret />
                <SmallButton icon={<MfaIcon />} text="Edit MFA" />
                <SmallButton icon={<Revoke />} text="Revoke Session Tokens" />
              </SmallCol>
            </GroupBody>
            <GroupLabel>Edit</GroupLabel>
          </Group>
          <Group $w={97}>
            <GroupBody $pad={6}>
              <BigButton w={43} caret="inline" icon={<DocStack />} lines={["Create", "Users"]} />
              <BigButton w={43} caret="inline" icon={<DocStack pencil />} lines={["Update", "Users"]} />
            </GroupBody>
            <GroupLabel>From File</GroupLabel>
          </Group>
          <Group $w={443}>
            <GroupBody $pad={9}>
              <SmallCol $w={155}>
                <SmallButton icon={<Groups />} text="Group Memberships..." caret gap={5} />
                <SmallButton icon={<KeyDoc />} text="Licenses..." caret />
                <SmallButton icon={<OneDrive />} text="OneDrive Files..." caret />
              </SmallCol>
              <SmallCol $w={155}>
                <SmallButton icon={<MailPerm />} text="Mailbox Permissions..." caret gap={5} />
                <SmallButton icon={<Envelope />} text="Messages..." caret />
                <SmallButton icon={<Calendar />} text="Events..." caret />
              </SmallCol>
              <SmallCol $w={124}>
                <SmallButton icon={<Rules />} text="Message Rules..." caret />
                <SmallButton icon={<ContactCard />} text="Contacts..." caret />
                <SmallButton icon={<ChatBubble />} text="Show Chats..." caret />
              </SmallCol>
            </GroupBody>
            <GroupLabel>User Management</GroupLabel>
          </Group>
          <Group $w={139} $plain>
            <GroupBody>
              <BigButton w={139} caret="inline" icon={<Groups s={32} />} lines={["On-prem Group", "Memberships.."]} />
            </GroupBody>
            <GroupLabel>On-prem User Management</GroupLabel>
          </Group>
        </Ribbon>

        <EditMenu>
          <MenuItem>
            <MenuIcon><CloudIcon s={17} /></MenuIcon>
            Edit in cloud
          </MenuItem>
          <MenuItem $on>
            <MenuIcon><ServerIcon s={16} /></MenuIcon>
            Edit on-premises
          </MenuItem>
        </EditMenu>

        <FilterBar>
          <Chip $w={204}>Common Info :: Sync status</Chip>
          <Chip $w={182} $drop>User Info :: Department</Chip>
          <Bin><TrashIcon /></Bin>
        </FilterBar>

        <Main>
          <Rail>
            <RailGrid />
            <RailText $flip>VIEWS / JOBS</RailText>
          </Rail>
          <GridPane>
            <GridBody>
              <GridTable>
                <HeadTop>
                  <HeadCell $span="1 / 6">System</HeadCell>
                  <HeadCell $span="6 / 19">Common Info</HeadCell>
                  <HeadCell $span="19 / 21" $blue><BlueHeadText>On-Premises fields</BlueHeadText></HeadCell>
                </HeadTop>
                <HeadRow>
                  <HeadCell $span="1 / 3" $clip><Padlock />Mult...</HeadCell>
                  <HeadCell $clip><Padlock /></HeadCell>
                  <HeadCell $clip><Padlock /></HeadCell>
                  <HeadCell $clip><Padlock />On-Pre...</HeadCell>
                  <HeadCell>Display Name</HeadCell>
                  <HeadCell>Username</HeadCell>
                  <HeadCell>Sync status</HeadCell>
                  <HeadCell />
                  <HeadCell />
                  <HeadCell />
                  <HeadCell />
                  <HeadCell />
                  <HeadCell />
                  <HeadCell>Effective Assigned Licen...</HeadCell>
                  <HeadCell>Unit Cos...</HeadCell>
                  <HeadCell>Manager</HeadCell>
                  <HeadCell>Department</HeadCell>
                  <HeadCell>Enabled</HeadCell>
                  <HeadCell $fill>Department</HeadCell>
                </HeadRow>
                <GroupRow level={0} glyph={<CloudIcon />} title="In cloud (264)" cost="$1,581.00" />
                <GroupRow level={0} glyph={<ServerIcon />} title="On-premises (20)" />
                <GroupRow level={0} open glyph={<SyncArrows />} title="Synced (131)" cost="$348.00" />
                <GroupRow title="(-unset-) (10)" cost="$15.00" />
                <GroupRow open title="Consulting Departement (1)" />
                <UserRow dept="Consulting Departement" u={{ name: "Carolina Daugherty", mail: "Carolina.Daugherty@sygx2.onmicrosoft.com", lic: false, on: true }} />
                <GroupRow open title="Customer support (1)" cost="$3.00" />
                <UserRow dept="Customer support" u={{ name: "Ahmed Liu", mail: "Ahmed.Liu@sygx2.onmicrosoft.com", lic: true, mgr: "Aden Wade", on: true }} />
                <GroupRow title="Engineering (8)" cost="$21.00" />
                <GroupRow title="Finance (14)" cost="$39.00" />
                <GroupRow title="IT (16)" cost="$87.00" />
                <GroupRow open title="Marketing (17)" cost="$21.00" />
                {marketing.map((u) => (
                  <UserRow key={u.name} u={u} />
                ))}
                <UserRow u={{ name: "", mail: "", lic: false, on: true }} />
              </GridTable>
              <VScroll>
                <ArrowUp />
                <VThumb $h={215} />
                <ArrowDown $gap={577} />
              </VScroll>
            </GridBody>
            <HScroll>
              <ArrowLeftTri />
              <HThumb $w={1260} />
              <ArrowRightTri />
            </HScroll>
          </GridPane>
          <Rail>
            <RailList />
            <RailText>DATA VIEWER</RailText>
          </Rail>
        </Main>

        <StatusTop>Rows Loaded: 415 | Rows Displayed: 415 | Rows Selected: 1</StatusTop>
        <StatusBottom>
          Edit on-premises
          <Lights>
            <Light>CAP</Light>
            <Light $on>NUM</Light>
            <Light>SCRL</Light>
          </Lights>
        </StatusBottom>
        <Taskbar />

        <Dialog>
          <DialogHead>
            <Logo s={17} />
            <DialogTitleText>Edit 5 user(s) on-premises</DialogTitleText>
            <X size={16} color="#222" strokeWidth={1.5} />
          </DialogHead>
          <ToolRow>
            <ToolButton><SquareSign />Collapse All</ToolButton>
            <ToolButton><SquareSign plus />Expand All</ToolButton>
          </ToolRow>
          <SearchRow>
            <SearchButton><Eraser /></SearchButton>
            <SearchInput readOnly placeholder="Quick search" />
            <SearchButton><Search size={15} color={STEEL} strokeWidth={3} /></SearchButton>
          </SearchRow>
          <DialogBody>
            <Sections>
              <SectionHead>
                <SectionName>Mandatory Information</SectionName>
                <ChevronRight size={24} color={STEEL} strokeWidth={2} />
              </SectionHead>
              <SectionHead>
                <SectionName>Basic Information</SectionName>
                <ChevronRight size={24} color={STEEL} strokeWidth={2} />
              </SectionHead>
              <SectionHead $open>
                <SectionName><EditSquare />Job Information</SectionName>
                <ChevronDown size={26} color={STEEL} strokeWidth={2} />
              </SectionHead>
              <Fields>
                {fields.map((f) => (
                  <FieldRow key={f} $tall={f === "Department"}>
                    <FieldLabel>{f}</FieldLabel>
                    {f === "Department" ? (
                      <FieldValue>
                        <RevertGlyph><RotateCcw size={16} color={STEEL} strokeWidth={2.5} /></RevertGlyph>
                        <FieldInput readOnly value="Customer support" />
                      </FieldValue>
                    ) : (
                      <FieldValue>
                        <BluePencil />
                        {f === "Fax" || f === "PO Box" ? "" : "[Different values]"}
                      </FieldValue>
                    )}
                  </FieldRow>
                ))}
              </Fields>
            </Sections>
            <DScroll>
              <ArrowUp $c="#888" />
              <DThumb />
              <ArrowDown $c="#888" $gap={208} />
            </DScroll>
          </DialogBody>
          <DialogFoot>
            <FootButton>Reset</FootButton>
            <FootButton>Apply</FootButton>
            <FootButton>Cancel</FootButton>
          </DialogFoot>
          <Callout />
          <GripCorner><Grip /></GripCorner>
        </Dialog>
      </Shell>
    </>
  );
}
